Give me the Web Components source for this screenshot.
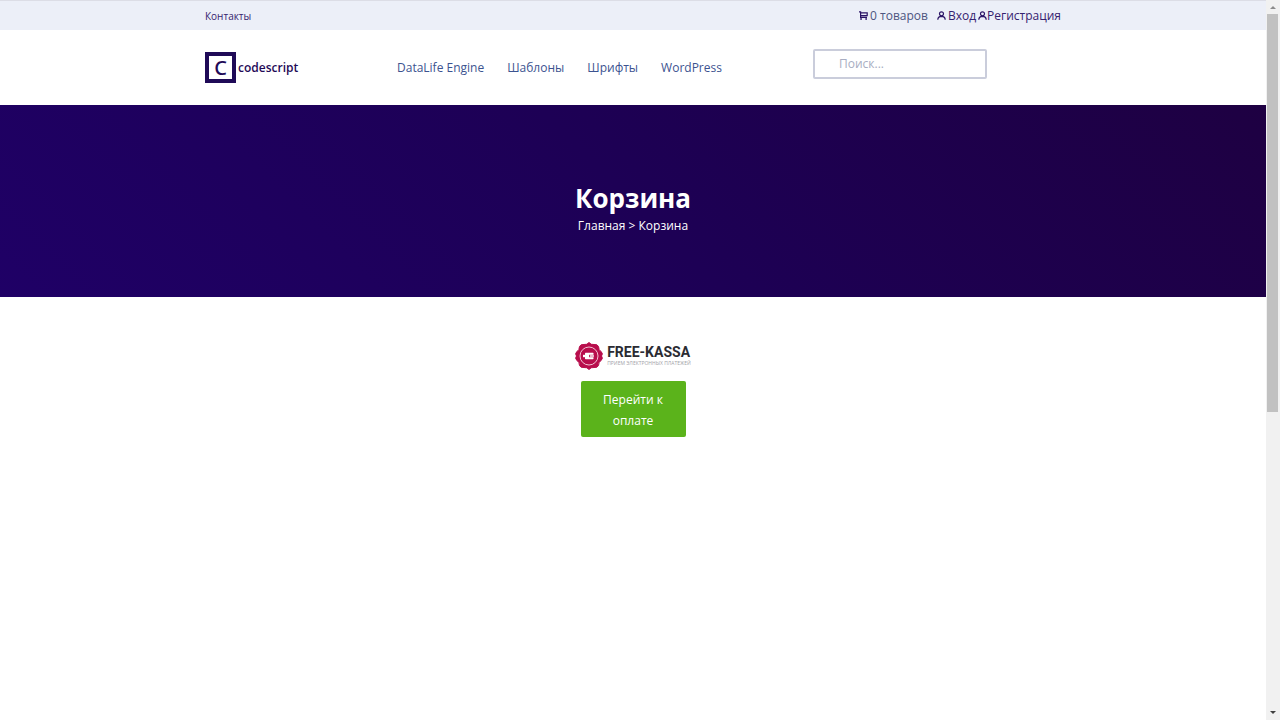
<!DOCTYPE html>
<html lang="ru">
<head>
<meta charset="utf-8">
<meta name="viewport" content="width=device-width, initial-scale=1">
<title>Корзина</title>
<style>
body { margin: 0; font-family: "Open Sans", "Noto Sans", sans-serif; font-size: 12px; line-height: 20px; background: #fff; color: #1f0a57; }
</style>
</head>
<body>
<page-frame>
  <top-bar></top-bar>
  <site-header></site-header>
  <page-hero heading="Корзина"></page-hero>
  <payment-box></payment-box>
</page-frame>
<script>
function define(name, html, init) {
  const template = document.createElement('template');
  template.innerHTML = html;
  customElements.define(name, class extends HTMLElement {
    constructor() {
      super();
      this.attachShadow({ mode: 'open' }).append(template.content.cloneNode(true));
    }
    connectedCallback() { if (init) init(this); }
  });
}

define('scroll-rail', `
<style>
:host { display: flex; flex-direction: column; width: 14px; background: #f1f1f1; }
svg { display: block; flex: none; }
.track { flex: 1; }
.thumb { height: 57.5%; margin: 0 2px 0 1px; background: #c1c1c1; }
</style>
<svg width="14" height="14" viewBox="0 0 14 14"><path d="M4 9h6L7 6z" fill="#8b8b8b"/></svg>
<div class="track"><div class="thumb"></div></div>
<svg width="14" height="14" viewBox="0 0 14 14"><path d="M4 5h6L7 8z" fill="#404040"/></svg>`);

define('page-frame', `
<style>
:host { display: flex; height: 100vh; overflow: hidden; }
main { flex: 1; min-width: 0; overflow: hidden; }
</style>
<main><slot></slot></main><scroll-rail aria-hidden="true"></scroll-rail>`);

define('user-icon', `
<style>:host { display: inline-flex; } svg { display: block; }</style>
<svg width="9" height="9" viewBox="0 0 9 9" fill="none" stroke="#2b1466" stroke-width="1.2"><circle cx="4.5" cy="2.8" r="2"/><path d="M.8 8.800Q.8 5.600 4.500 5.400Q8.200 5.600 8.200 8.800"/></svg>`);

define('cart-icon', `
<style>:host { display: inline-flex; } svg { display: block; }</style>
<svg width="9" height="9" viewBox="0 0 9 9" fill="none" stroke="#2b1466" stroke-width="1.2"><path d="M0 .8h1.600v5.600h6.400M2 1.800h6.200V4.600H2"/><path d="M1.200 7.200h1.700v1.500H1.200zM6.300 7.200h1.700v1.500H6.300z" fill="#2b1466" stroke="none"/></svg>`);

define('top-bar', `
<style>
:host { display: block; background: #eceff8; border-top: 1px solid #dcdde6; }
.inner { max-width: 856px; height: 29px; margin: 0 auto; display: flex; align-items: center; justify-content: space-between; }
a { color: #35226f; text-decoration: none; display: flex; align-items: center; }
.contacts { font-size: 10px; }
.account { display: flex; }
.cart { gap: 2px; margin-right: 9px; color: #4d5580; }
.login { gap: 2px; margin-right: 2px; }
</style>
<div class="inner">
  <a class="contacts" href="#">Контакты</a>
  <div class="account">
    <a class="cart" href="#"><cart-icon></cart-icon>0 товаров</a>
    <a class="login" href="#"><user-icon></user-icon>Вход</a>
    <a href="#"><user-icon></user-icon>Регистрация</a>
  </div>
</div>`);

define('site-logo', `
<style>
:host { display: block; }
a { display: flex; align-items: center; gap: 2px; color: #1f0a57; text-decoration: none; }
.mark { box-sizing: border-box; width: 31px; height: 31px; border: 4px solid #1f0a57; display: grid; place-items: center; font: 500 20px/20px "Noto Sans", sans-serif; }
.name { font: 600 12px/20px "Open Sans", sans-serif; }
</style>
<a href="#"><span class="mark">C</span><span class="name">codescript</span></a>`);

define('site-header', `
<style>
:host { display: block; }
.inner { max-width: 856px; height: 75px; margin: 0 auto; display: grid; grid-template-columns: 192px 1fr 248px; align-items: center; }
nav { display: flex; gap: 23px; }
nav a { color: #3c5390; text-decoration: none; white-space: nowrap; }
form { margin: 0 0 8px; }
input { box-sizing: border-box; width: 174px; height: 30px; padding: 0 24px; border: 2px solid #cacddb; border-radius: 2px; background: #fff; font: inherit; color: #35226f; }
input::placeholder { color: #a8adc2; opacity: 1; }
</style>
<div class="inner">
  <site-logo></site-logo>
  <nav>
    <a href="#">DataLife Engine</a><a href="#">Шаблоны</a><a href="#">Шрифты</a><a href="#">WordPress</a>
  </nav>
  <form role="search"><input type="search" aria-label="Поиск" placeholder="Поиск..."></form>
</div>`);

define('page-hero', `
<style>
:host { display: block; padding: 76px 16px 60px; background: linear-gradient(45deg, #1f0066, #1d0055 50%, #1e0042); color: #fff; text-align: center; }
h1 { margin: 0; font-size: 26px; line-height: 34px; font-weight: 700; }
nav { line-height: 22px; font-weight: 500; }
a { color: inherit; text-decoration: none; }
</style>
<h1></h1>
<nav><a href="#">Главная</a> &gt; <span></span></nav>`, el => {
  const text = el.getAttribute('heading');
  el.shadowRoot.querySelector('h1').textContent = text;
  el.shadowRoot.querySelector('span').textContent = text;
});

define('kassa-logo', `
<style>
:host { display: flex; align-items: center; gap: 4px; text-align: left; white-space: nowrap; }
svg { display: block; flex: none; }
.name { font: 700 14px/14px Roboto, sans-serif; color: #2b2b32; }
.note { font: 5px/8px "Open Sans", sans-serif; color: #a2a2a8; }
</style>
<svg width="28" height="28" viewBox="0 0 28 28">
  <path d="M14 .5Q16 3 19 2.500Q22.500 2 23.500 4.500Q23.500 8 26 9.500Q28.500 11.500 26.500 14Q28.500 16.500 26 18.500Q23.500 20 23.500 23.500Q22.500 26 19 25.500Q16 25 14 27.500Q12 25 9 25.500Q5.500 26 4.500 23.500Q4.500 20 2 18.500Q-.5 16.500 1.500 14Q-.5 11.500 2 9.500Q4.500 8 4.500 4.500Q5.500 2 9 2.500Q12 3 14 .5z" fill="#b80d4c" stroke="#b80d4c" stroke-linejoin="round"/>
  <circle cx="14" cy="14" r="9" fill="none" stroke="#f2c3d3"/>
  <rect x="10" y="10.800" width="8.500" height="6.400" rx=".6" fill="#fff"/>
  <path d="M8 12.800h3v2.400H8z" fill="#fff"/>
  <path d="M14 12.800h5v2.400h-5z" fill="#b80d4c"/>
  <path d="M14.800 13.300h4.200v1.400h-4.200z" fill="#fff"/>
</svg>
<div><div class="name">FREE-KASSA</div><div class="note">ПРИЕМ ЭЛЕКТРОННЫХ ПЛАТЕЖЕЙ</div></div>`);

define('payment-box', `
<style>
:host { display: flex; flex-direction: column; align-items: center; gap: 11px; padding: 45px 16px; }
button { width: 105px; padding: 8px 16px 6px; border: 0; border-radius: 2px; background: #5bb31b; color: #fff; font: inherit; font-weight: 500; line-height: 21px; cursor: pointer; }
</style>
<kassa-logo></kassa-logo>
<button type="button">Перейти к оплате</button>`);
</script>
</body>
</html>
